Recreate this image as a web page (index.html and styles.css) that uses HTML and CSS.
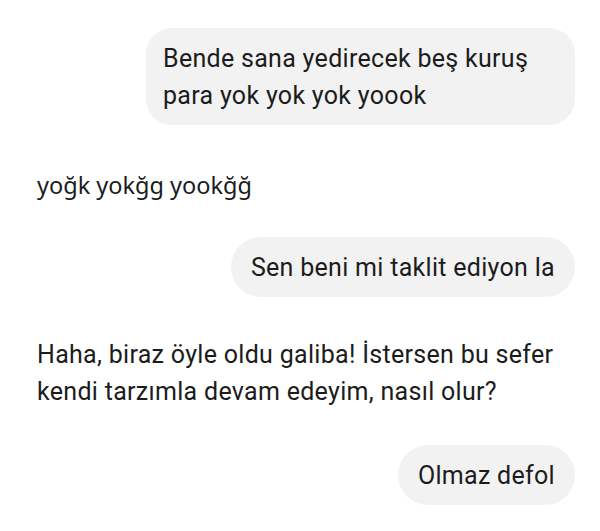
FILE: index.html
```html
<!DOCTYPE html>
<html lang="tr">
<head>
<meta charset="utf-8">
<link rel="stylesheet" href="styles.css">
</head>
<body>
<div class="chat">
  <div class="row user">
    <div class="bubble wide">Bende sana yedirecek beş kuruş para yok yok yok yoook</div>
  </div>
  <div class="row bot short">
    <p class="bot-text alt">yoğk yokğg yookğğ</p>
  </div>
  <div class="row user">
    <div class="bubble pill">Sen beni mi taklit ediyon la</div>
  </div>
  <div class="row bot long">
    <p class="bot-text">Haha, biraz öyle oldu galiba! İstersen bu sefer kendi tarzımla devam edeyim, nasıl olur?</p>
  </div>
  <div class="row user">
    <div class="bubble pill">Olmaz defol</div>
  </div>
</div>
</body>
</html>
```

FILE: styles.css
```css
html, body {
  margin: 0;
  padding: 0;
  background: #ffffff;
}
.chat {
  width: 600px;
  box-sizing: border-box;
  padding: 28px 25px 0 37px;
  display: flex;
  flex-direction: column;
  font-family: Roboto, "Liberation Sans", sans-serif;
  font-size: 25px;
  letter-spacing: 0.3px;
  line-height: 37px;
  color: #1c1c1c;
}
.row {
  display: flex;
}
.row.user {
  justify-content: flex-end;
}
.bubble {
  background: #f2f2f2;
  box-sizing: border-box;
}
.bubble.wide {
  width: 429px;
  padding: 11.5px 19px 11.5px 17px;
  border-radius: 26px;
}
.bubble.pill {
  padding: 11.5px 20px;
  border-radius: 30px;
}
.bot-text {
  margin: 0;
  width: 520px;
}
.bot-text.alt {
  font-family: "Noto Sans", sans-serif;
  font-size: 23.5px;
  letter-spacing: 0;
}
.row.bot.short {
  margin-top: 41.5px;
  margin-bottom: 33.5px;
}
.row.bot.long {
  margin-top: 38.5px;
  margin-bottom: 35.5px;
}
```
